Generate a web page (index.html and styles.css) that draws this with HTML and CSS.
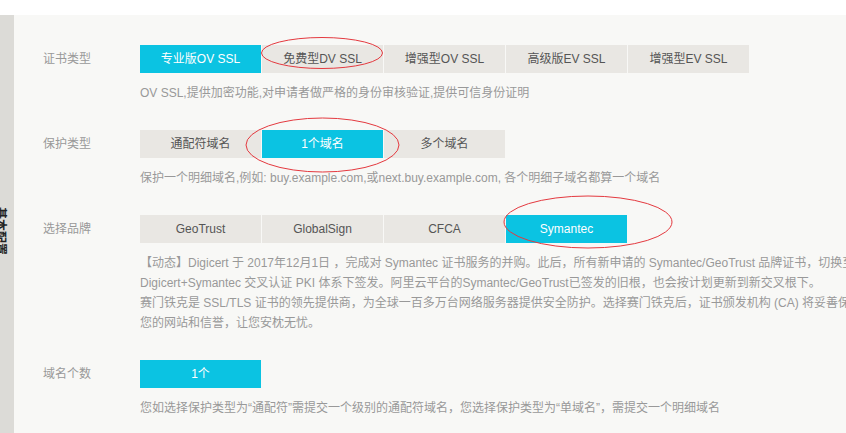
FILE: index.html
```html
<!DOCTYPE html>
<html lang="zh-CN">
<head>
<meta charset="utf-8">
<title>SSL证书配置</title>
<link rel="stylesheet" href="styles.css">
</head>
<body>
<div class="top"></div>
<div class="main">
  <div class="side"><span class="side-text">基本配置</span></div>
  <div class="content">
    <div class="row">
      <div class="label">证书类型</div>
      <div class="field">
        <div class="btns">
          <span class="btn on">专业版OV SSL</span>
          <span class="btn">免费型DV SSL</span>
          <span class="btn">增强型OV SSL</span>
          <span class="btn">高级版EV SSL</span>
          <span class="btn">增强型EV SSL</span>
        </div>
        <div class="desc">OV SSL,提供加密功能,对申请者做严格的身份审核验证,提供可信身份证明</div>
      </div>
    </div>
    <div class="row">
      <div class="label">保护类型</div>
      <div class="field">
        <div class="btns">
          <span class="btn">通配符域名</span>
          <span class="btn on">1个域名</span>
          <span class="btn">多个域名</span>
        </div>
        <div class="desc">保护一个明细域名,例如: buy.example.com,或next.buy.example.com, 各个明细子域名都算一个域名</div>
      </div>
    </div>
    <div class="row">
      <div class="label">选择品牌</div>
      <div class="field">
        <div class="btns">
          <span class="btn">GeoTrust</span>
          <span class="btn">GlobalSign</span>
          <span class="btn">CFCA</span>
          <span class="btn on">Symantec</span>
        </div>
        <div class="desc">
          <div class="line">【动态】Digicert 于 2017年12月1日 ，完成对 Symantec 证书服务的并购。此后，所有新申请的 Symantec/GeoTrust 品牌证书，切换至</div>
          <div class="line">Digicert+Symantec 交叉认证 PKI 体系下签发。阿里云平台的Symantec/GeoTrust已签发的旧根，也会按计划更新到新交叉根下。</div>
          <div class="line">赛门铁克是 SSL/TLS 证书的领先提供商，为全球一百多万台网络服务器提供安全防护。选择赛门铁克后，证书颁发机构 (CA) 将妥善保护</div>
          <div class="line">您的网站和信誉，让您安枕无忧。</div>
        </div>
      </div>
    </div>
    <div class="row">
      <div class="label">域名个数</div>
      <div class="field">
        <div class="btns">
          <span class="btn on">1个</span>
        </div>
        <div class="desc">您如选择保护类型为“通配符”需提交一个级别的通配符域名，您选择保护类型为“单域名”，需提交一个明细域名</div>
      </div>
    </div>
  </div>
</div>
<svg class="marks" width="846" height="433" viewBox="0 0 846 433">
  <ellipse cx="322" cy="53" rx="60.5" ry="15.5"/>
  <ellipse cx="322.5" cy="145" rx="76.5" ry="27"/>
  <ellipse cx="588" cy="222" rx="84" ry="26"/>
</svg>
</body>
</html>
```

FILE: styles.css
```css
html, body {
  margin: 0;
  padding: 0;
  background: #fff;
  overflow: hidden;
  width: 846px;
  height: 433px;
}
body {
  position: relative;
  font-family: "Liberation Sans", "Noto Sans CJK SC", sans-serif;
  font-size: 12px;
}
.top {
  height: 15px;
}
.main {
  display: flex;
  height: 418px;
}
.side {
  width: 14px;
  flex: none;
  background: #dcdbd7;
  display: flex;
  align-items: center;
  overflow: hidden;
}
.side-text {
  writing-mode: vertical-rl;
  text-orientation: sideways;
  font-size: 12px;
  line-height: 12px;
  font-weight: bold;
  color: #222;
  margin-left: -6px;
  margin-top: 14px;
}
.content {
  flex: 1;
  background: #f8f8f6;
  padding: 30px 0 0 29px;
  display: flex;
  flex-direction: column;
  gap: 27px;
}
.row {
  display: flex;
}
.label {
  width: 97px;
  flex: none;
  height: 28px;
  line-height: 28px;
  color: #999;
}
.field {
  flex: none;
}
.btns {
  display: flex;
  gap: 1px;
}
.btn {
  width: 121px;
  height: 28px;
  line-height: 28px;
  text-align: center;
  background: #e9e7e3;
  color: #555;
}
.btn.on {
  background: #0bc3e2;
  color: #fff;
}
.desc {
  margin-top: 10px;
  line-height: 20px;
  color: #999;
  white-space: nowrap;
}
.marks {
  position: absolute;
  left: 0;
  top: 0;
  pointer-events: none;
}
.marks ellipse {
  fill: none;
  stroke: #e4393f;
  stroke-width: 1;
}
```
